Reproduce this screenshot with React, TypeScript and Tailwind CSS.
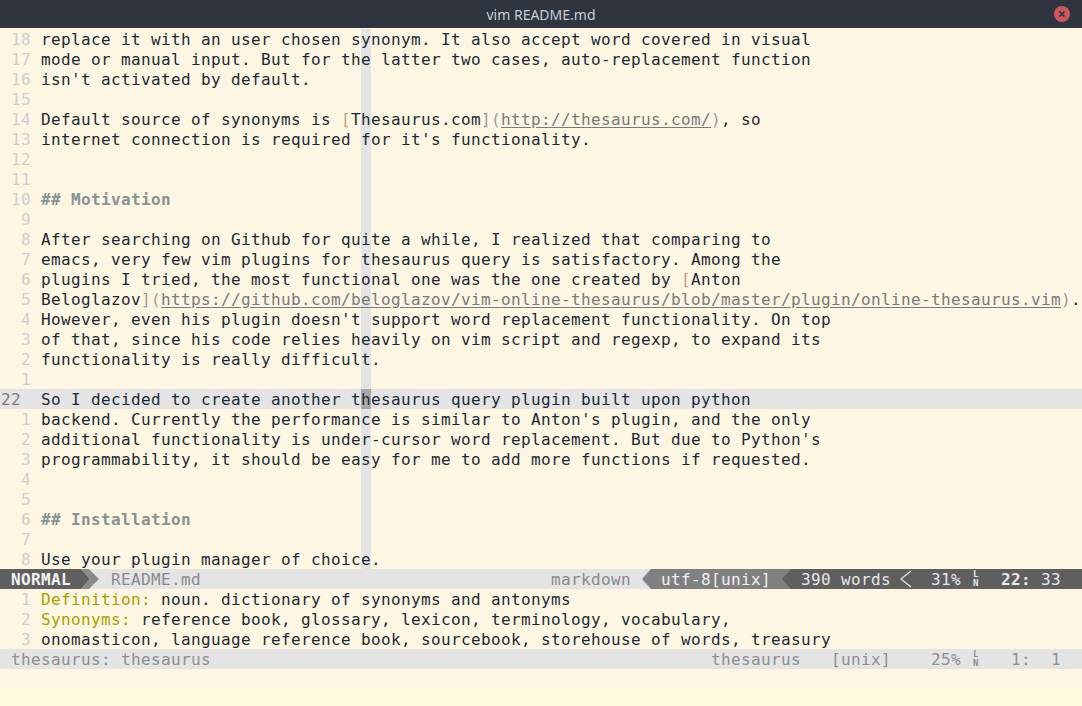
import React from 'react';

type Seg = [string, string?];

const TEXT = 'text-[#1d2a33]';
const HEAD = 'text-[#869393] font-bold';
const BRACK = 'text-[#c8a080]';
const PUNCT = 'text-[#9a9a9a]';
const URL = 'text-[#7a7a7a] underline underline-offset-2';
const OLIVE = 'text-[#a89f00]';

// cursor column (0-based, text area)
const CUR_COL = 32;

const mainLines: { n: string; segs: Seg[]; current?: boolean }[] = [
  { n: '18', segs: [['replace it with an user chosen synonym. It also accept word covered in visual']] },
  { n: '17', segs: [['mode or manual input. But for the latter two cases, auto-replacement function']] },
  { n: '16', segs: [["isn't activated by default."]] },
  { n: '15', segs: [] },
  {
    n: '14',
    segs: [
      ['Default source of synonyms is '],
      ['[', BRACK],
      ['Thesaurus.com'],
      ['](', PUNCT],
      ['http://thesaurus.com/', URL],
      [')', PUNCT],
      [', so'],
    ],
  },
  { n: '13', segs: [["internet connection is required for it's functionality."]] },
  { n: '12', segs: [] },
  { n: '11', segs: [] },
  { n: '10', segs: [['## Motivation', HEAD]] },
  { n: '9', segs: [] },
  { n: '8', segs: [['After searching on Github for quite a while, I realized that comparing to']] },
  { n: '7', segs: [['emacs, very few vim plugins for thesaurus query is satisfactory. Among the']] },
  { n: '6', segs: [['plugins I tried, the most functional one was the one created by '], ['[', BRACK], ['Anton']] },
  {
    n: '5',
    segs: [
      ['Beloglazov'],
      ['](', PUNCT],
      ['https://github.com/beloglazov/vim-online-thesaurus/blob/master/plugin/online-thesaurus.vim', URL],
      [')', PUNCT],
      ['.'],
    ],
  },
  { n: '4', segs: [["However, even his plugin doesn't support word replacement functionality. On top"]] },
  { n: '3', segs: [['of that, since his code relies heavily on vim script and regexp, to expand its']] },
  { n: '2', segs: [['functionality is really difficult.']] },
  { n: '1', segs: [] },
  { n: '22', current: true, segs: [['So I decided to create another thesaurus query plugin built upon python']] },
  { n: '1', segs: [["backend. Currently the performance is similar to Anton's plugin, and the only"]] },
  { n: '2', segs: [["additional functionality is under-cursor word replacement. But due to Python's"]] },
  { n: '3', segs: [['programmability, it should be easy for me to add more functions if requested.']] },
  { n: '4', segs: [] },
  { n: '5', segs: [] },
  { n: '6', segs: [['## Installation', HEAD]] },
  { n: '7', segs: [] },
  { n: '8', segs: [['Use your plugin manager of choice.']] },
];

const thesLines: { n: string; segs: Seg[] }[] = [
  { n: '1', segs: [['Definition:', OLIVE], [' noun. dictionary of synonyms and antonyms']] },
  { n: '2', segs: [['Synonyms:', OLIVE], [' reference book, glossary, lexicon, terminology, vocabulary,']] },
  { n: '3', segs: [['onomasticon, language reference book, sourcebook, storehouse of words, treasury']] },
];

// split segments so the char at `col` gets its own highlight cell
const withColumn = (segs: Seg[], col: number, colCls: string) => {
  const out: React.ReactNode[] = [];
  const cell = `inline-block h-[20px] align-top ${colCls}`;
  let pos = 0;
  let done = false;
  segs.forEach(([txt, cls], i) => {
    const c = cls ?? TEXT;
    if (!done && pos <= col && col < pos + txt.length) {
      const k = col - pos;
      if (k > 0) out.push(<span key={i + 'a'} className={c}>{txt.slice(0, k)}</span>);
      out.push(<span key={i + 'b'} className={`${c} ${cell}`}>{txt[k]}</span>);
      if (k + 1 < txt.length) out.push(<span key={i + 'c'} className={c}>{txt.slice(k + 1)}</span>);
      done = true;
    } else {
      out.push(<span key={i} className={c}>{txt}</span>);
    }
    pos += txt.length;
  });
  if (!done) {
    out.push(<span key="pad">{' '.repeat(col - pos)}</span>);
    out.push(<span key="cc" className={cell}> </span>);
  }
  return out;
};

const Row = ({ n, segs, current, column }: { n: string; segs: Seg[]; current?: boolean; column?: boolean }) => (
  <div className={`h-[20px] leading-[22px] pl-[1px] whitespace-pre overflow-hidden ${current ? 'bg-[#e4e4e4]' : ''}`}>
    <span className={current ? 'text-[#7c7c7c]' : 'text-[#cfcfcf]'}>
      {current ? n.padEnd(4, ' ') : n.padStart(3, ' ') + ' '}
    </span>
    {column
      ? withColumn(segs, CUR_COL, current ? 'bg-[#a8a8a8]' : 'bg-[#e4e4e4]')
      : segs.map(([t, c], i) => (
          <span key={i} className={c ?? TEXT}>
            {t}
          </span>
        ))}
  </div>
);

const LN = ({ cls }: { cls: string }) => (
  <span className={`inline-flex flex-col items-center w-[10px] h-[20px] text-[9px] leading-[9px] font-bold pt-[1px] ${cls}`}>
    <span>L</span>
    <span>N</span>
  </span>
);

const ActiveStatus = () => (
  <div className="flex h-[20px] leading-[22px] bg-[#e4e4e4] whitespace-pre overflow-hidden">
    <span className="bg-[#5f5f5f] text-[#f2f2f2] font-bold pl-[1px]">{' NORMAL '}</span>
    <svg width="20" height="20" viewBox="0 0 20 20" className="shrink-0">
      <polygon points="0,0 9,10 0,20" fill="#5f5f5f" />
      <polygon points="0,0 8,0 18,10 8,20 0,20 9,10" fill="#8a8a8a" />
    </svg>
    <span className="text-[#8a8a8a]">{' README.md'}</span>
    <span className="flex-1" />
    <span className="text-[#8a8a8a]">{'markdown '}</span>
    <svg width="10" height="20" viewBox="0 0 10 20" className="shrink-0">
      <polygon points="10,0 1,10 10,20" fill="#808080" />
      <line x1="10" y1="0" x2="1" y2="10" stroke="#a9b0c4" strokeWidth="1" />
      <line x1="1" y1="10" x2="10" y2="20" stroke="#a9b0c4" strokeWidth="1" />
    </svg>
    <span className="bg-[#808080] text-[#f0f0f0]">{' utf-8[unix] '}</span>
    <svg width="10" height="20" viewBox="0 0 10 20" className="shrink-0 bg-[#808080]">
      <polygon points="10,0 1,10 10,20" fill="#5f5f5f" />
    </svg>
    <span className="flex bg-[#5f5f5f] text-[#e8e8e8] pr-[1px]">
      <span>{' 390 words '}</span>
      <svg width="10" height="20" viewBox="0 0 10 20" className="shrink-0 overflow-visible">
        <path d="M10 2 L0 10 L10 18" fill="none" stroke="#e8e8e8" strokeWidth="1.2" />
      </svg>
      <span>{'  31% '}</span>
      <LN cls="text-[#e8e8e8]" />
      <span>{'  '}</span>
      <span className="font-bold">22:</span>
      <span>{' 33  '}</span>
    </span>
  </div>
);

const InactiveStatus = () => (
  <div className="flex h-[20px] leading-[22px] bg-[#e4e4e4] text-[#8f8f8f] whitespace-pre pl-[1px] pr-[1px] overflow-hidden">
    <span>{' thesaurus: thesaurus'}</span>
    <span className="flex-1" />
    <span>{'thesaurus   [unix]    25% '}</span>
    <LN cls="text-[#8f8f8f]" />
    <span>{'   1:  1  '}</span>
  </div>
);

export default function App() {
  return (
    <div className="w-[1082px] h-[706px] overflow-hidden flex flex-col bg-[#fffbdb]">
      {/* title bar */}
      <div className="h-[28px] shrink-0 bg-[#2f343f] flex items-center justify-center relative">
        <span className="text-[#c9cfd8] text-[14px]" style={{ fontFamily: '"Noto Sans", sans-serif' }}>
          vim README.md
        </span>
        <svg width="16" height="16" viewBox="0 0 16 16" className="absolute right-[12px] top-[6px]">
          <circle cx="8" cy="8" r="8" fill="#cc575d" />
          <path d="M5.5 5.5 L10.5 10.5 M10.5 5.5 L5.5 10.5" stroke="#2f343f" strokeWidth="1.6" />
        </svg>
      </div>

      {/* vim grid */}
      <div
        className="bg-[#fdf6e3] pt-[1px] text-[16px] tracking-[0.367px]"
        style={{ fontFamily: '"DejaVu Sans Mono", monospace' }}
      >
        {mainLines.map((l, i) => (
          <Row key={i} n={l.n} segs={l.segs} current={l.current} column />
        ))}
        <ActiveStatus />
        {thesLines.map((l, i) => (
          <Row key={i} n={l.n} segs={l.segs} />
        ))}
        <InactiveStatus />
        <div className="h-[20px]" />
      </div>
    </div>
  );
}
